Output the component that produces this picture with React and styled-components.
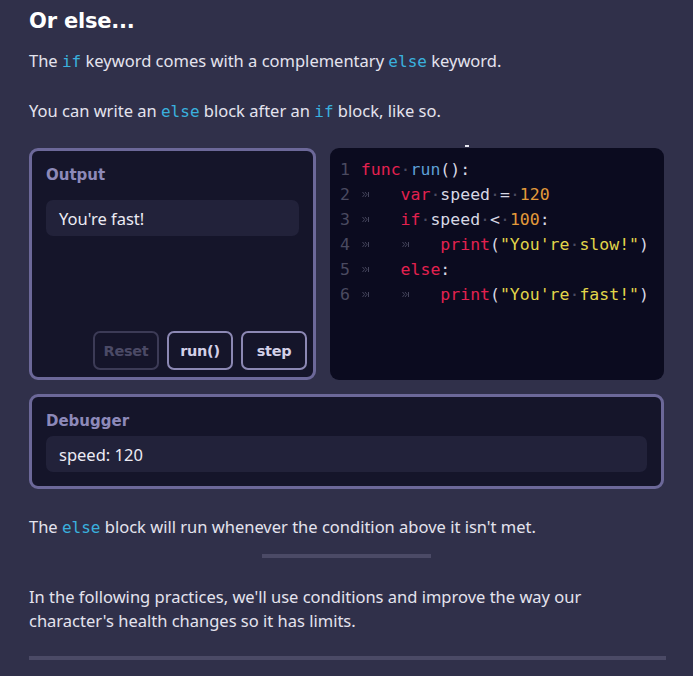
import React from "react";
import styled, { createGlobalStyle } from "styled-components";

const Global = createGlobalStyle`
  html, body { margin: 0; padding: 0; background: #30304a; }
  body { font-family: "Noto Sans", "Open Sans", sans-serif; color: #e4e3ee; }
`;

const Page = styled.div`
  width: 693px;
  height: 676px;
  box-sizing: border-box;
  padding: 6px 29px 0 29px;
  background: #30304a;
  overflow: hidden;
`;

const Heading = styled.h2`
  margin: 0;
  font-family: "DejaVu Sans", sans-serif;
  font-weight: 700;
  font-size: 21px;
  line-height: 30px;
  color: #ffffff;
  letter-spacing: -0.2px;
`;

const Para = styled.p`
  margin: ${(p) => p.$mt || 0}px 0 0 0;
  font-size: 16.5px;
  line-height: ${(p) => p.$lh || 24}px;
  color: #e4e3ee;
`;

const Kw = styled.code`
  font-family: "DejaVu Sans Mono", monospace;
  font-size: 16px;
  color: #3ab0de;
`;

const Row = styled.div`
  display: grid;
  grid-template-columns: 287px 1fr;
  gap: 14px;
  margin-top: 24px;
  height: 232px;
`;

const Panel = styled.div`
  box-sizing: border-box;
  border: 3px solid #6c6899;
  border-radius: 9px;
  background: #15152a;
  padding: 14px 14px 0 14px;
  display: flex;
  flex-direction: column;
`;

const Label = styled.div`
  font-family: "DejaVu Sans", sans-serif;
  font-weight: 700;
  font-size: 15px;
  line-height: 20px;
  color: #8d89b9;
`;

const Field = styled.div`
  margin-top: ${(p) => p.$mt}px;
  height: 36px;
  border-radius: 7px;
  background: #22223a;
  padding: 0 13px;
  display: flex;
  align-items: center;
  font-size: 16.5px;
  color: #ecebf3;
`;

const Buttons = styled.div`
  margin-top: auto;
  margin-right: -8px;
  margin-bottom: 7px;
  display: flex;
  justify-content: flex-end;
  gap: 8px;
`;

const Button = styled.button`
  width: 66px;
  height: 39px;
  box-sizing: border-box;
  border-radius: 7px;
  background: transparent;
  border: 2px solid ${(p) => (p.$disabled ? "#3c3b56" : "#8c88b4")};
  color: ${(p) => (p.$disabled ? "#4b4a66" : "#d3d0e8")};
  font-family: "DejaVu Sans", sans-serif;
  font-weight: 700;
  font-size: 14.5px;
  letter-spacing: -0.3px;
  padding: 0;
`;

const Code = styled.div`
  position: relative;
  background: #0b0b1f;
  border-radius: 9px;
  padding: 9px 10px 0 10px;
  font-family: "DejaVu Sans Mono", monospace;
  font-size: 16.5px;
  line-height: 25px;
  color: #d8d8e4;
  white-space: pre;
`;

const Mark = styled.span`
  position: absolute;
  top: -3px;
  left: 135px;
  width: 4px;
  height: 2px;
  background: #e8e8f0;
`;

const Line = styled.div`
  display: flex;
  align-items: center;
  height: 25px;
`;

const Num = styled.span`
  width: 2.1ch;
  flex: none;
  color: #4a4a60;
`;

const TabBox = styled.span`
  display: inline-flex;
  align-items: center;
  width: 4ch;
  height: 25px;
  vertical-align: top;
`;

const Tok = styled.span`
  color: ${(p) =>
    ({
      kw: "#e3214f",
      fn: "#5e9fd6",
      num: "#e39a3a",
      str: "#e2d64a",
      p: "#d8d8e4",
    })[p.$t]};
`;

const Dot = styled.span`
  color: #4a4a60;
`;

const Rule = styled.div`
  height: 4px;
  background: #4b4a66;
  margin: ${(p) => p.$mt}px auto 0 auto;
  width: ${(p) => p.$w};
`;

const Debugger = styled(Panel)`
  margin-top: 14px;
  height: 95px;
`;

const Tab = () => (
  <TabBox>
    <svg width="7" height="7" viewBox="0 0 7 7" style={{ marginLeft: 1 }}>
      <path d="M0.5 1 L2.5 3.5 L0.5 6 M3 1 L5 3.5 L3 6" stroke="#45455c" strokeWidth="1" fill="none" />
      <path d="M6.5 1 V6" stroke="#45455c" strokeWidth="1" />
    </svg>
  </TabBox>
);

const S = () => <Dot>·</Dot>;

const lines = [
  [<Tok $t="kw">func</Tok>, <S />, <Tok $t="fn">run</Tok>, <Tok $t="p">():</Tok>],
  [<Tab />, <Tok $t="kw">var</Tok>, <S />, <Tok $t="p">speed</Tok>, <S />, <Tok $t="p">=</Tok>, <S />, <Tok $t="num">120</Tok>],
  [<Tab />, <Tok $t="kw">if</Tok>, <S />, <Tok $t="p">speed</Tok>, <S />, <Tok $t="p">&lt;</Tok>, <S />, <Tok $t="num">100</Tok>, <Tok $t="p">:</Tok>],
  [<Tab />, <Tab />, <Tok $t="kw">print</Tok>, <Tok $t="p">(</Tok>, <Tok $t="str">"You're</Tok>, <S />, <Tok $t="str">slow!"</Tok>, <Tok $t="p">)</Tok>],
  [<Tab />, <Tok $t="kw">else</Tok>, <Tok $t="p">:</Tok>],
  [<Tab />, <Tab />, <Tok $t="kw">print</Tok>, <Tok $t="p">(</Tok>, <Tok $t="str">"You're</Tok>, <S />, <Tok $t="str">fast!"</Tok>, <Tok $t="p">)</Tok>],
];

export default function App() {
  return (
    <Page>
      <Global />
      <Heading>Or else...</Heading>
      <Para $mt={13}>
        The <Kw>if</Kw> keyword comes with a complementary <Kw>else</Kw> keyword.
      </Para>
      <Para $mt={25}>
        You can write an <Kw>else</Kw> block after an <Kw>if</Kw> block, like so.
      </Para>
      <Row>
        <Panel>
          <Label>Output</Label>
          <Field $mt={15}>You're fast!</Field>
          <Buttons>
            <Button $disabled>Reset</Button>
            <Button>run()</Button>
            <Button>step</Button>
          </Buttons>
        </Panel>
        <Code>
          <Mark />
          {lines.map((l, i) => (
            <Line key={i}>
              <Num>{i + 1}</Num>
              {l.map((t, j) => (
                <React.Fragment key={j}>{t}</React.Fragment>
              ))}
            </Line>
          ))}
        </Code>
      </Row>
      <Debugger>
        <Label>Debugger</Label>
        <Field $mt={5}>speed: 120</Field>
      </Debugger>
      <Para $mt={26}>
        The <Kw>else</Kw> block will run whenever the condition above it isn't met.
      </Para>
      <Rule $mt={14} $w="169px" />
      <Para $mt={27} $lh={24}>
        In the following practices, we'll use conditions and improve the way our
        <br />
        character's health changes so it has limits.
      </Para>
      <Rule $mt={23} $w="637px" />
    </Page>
  );
}
